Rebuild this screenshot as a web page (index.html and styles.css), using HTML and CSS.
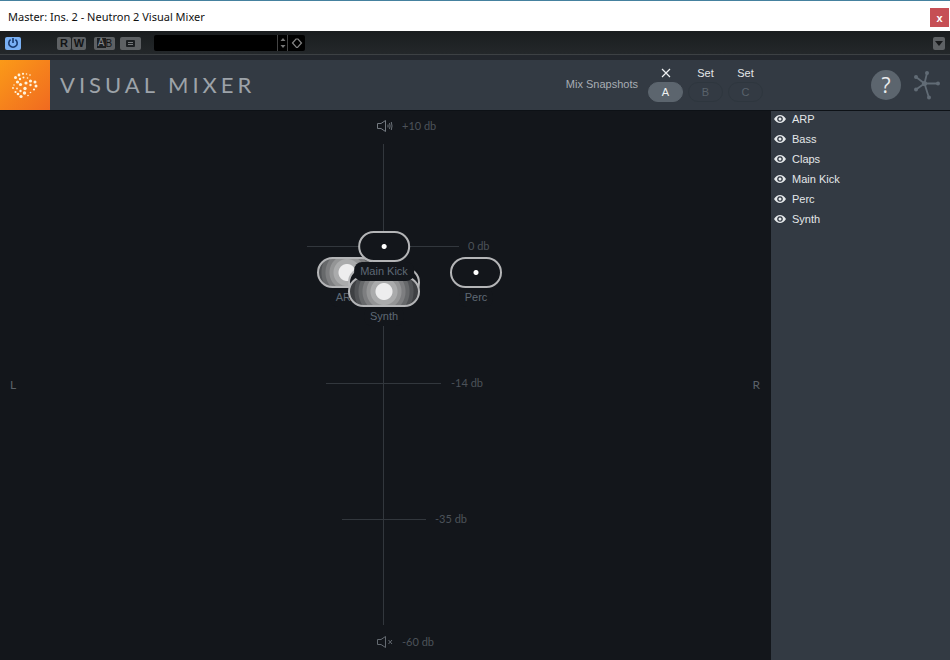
FILE: index.html
```html
<!DOCTYPE html>
<html lang="en">
<head>
<meta charset="utf-8">
<title>Master: Ins. 2 - Neutron 2 Visual Mixer</title>
<link rel="stylesheet" href="styles.css">
</head>
<body>
<div class="window">
  <header class="titlebar">
    <span class="titlebar-text">Master: Ins. 2 - Neutron 2 Visual Mixer</span>
    <button class="close" aria-label="Close window">x</button>
  </header>

  <div class="toolbar">
    <button class="tool power" aria-label="Bypass">
      <svg width="12" height="12" viewBox="0 0 12 12"><path d="M3.6 2.6a4.2 4.2 0 1 0 4.8 0M6 1v5" fill="none" stroke="#173a70" stroke-width="1.6"/></svg>
    </button>
    <div class="tool-pair">
      <button class="tool small">R</button>
      <button class="tool small">W</button>
    </div>
    <button class="tool wide ab"><span class="ab-a">A</span><span>B</span></button>
    <button class="tool wide" aria-label="Copy settings">
      <svg width="9" height="7" viewBox="0 0 9 7"><rect width="9" height="7" rx="1" fill="#1c1f22"/><path d="M2 2.500h5M2 4.500h5" stroke="#777a7d"/></svg>
    </button>
    <div class="preset">
      <input class="preset-name" type="text" aria-label="Preset name">
      <button class="preset-btn" aria-label="Step preset">
        <svg width="8" height="12" viewBox="0 0 8 12"><path d="M1.500 4L4 1l2.500 3zM1.500 8L4 11l2.500-3z" fill="#777"/></svg>
      </button>
      <button class="preset-btn preset-menu" aria-label="Preset menu">
        <svg width="12" height="12" viewBox="0 0 12 12"><path d="M1.500 6L5 2h2L10.500 6l-4 4.500h-1z" fill="none" stroke="#858585" stroke-width="1.200"/></svg>
      </button>
    </div>
    <button class="tool menu" aria-label="Plug-in menu">
      <svg width="8" height="5" viewBox="0 0 8 5"><path d="M0 0h8L4 5z" fill="#17191b"/></svg>
    </button>
  </div>

  <header class="header">
    <svg class="logo" viewBox="0 0 50 50" aria-hidden="true">
      <defs><linearGradient id="lg" x1="0" y1="0" x2="1" y2="1"><stop offset="0" stop-color="#fb9a18"/><stop offset="1" stop-color="#f06a20"/></linearGradient></defs>
      <rect width="50" height="50" fill="url(#lg)"/>
      <g fill="#fff4dc">
        <circle cx="15.500" cy="17.500" r="1.500"/><circle cx="19" cy="15" r="1.400"/><circle cx="23" cy="13.800" r="1.100"/><circle cx="26.500" cy="14" r=".8"/><circle cx="30" cy="15" r=".8"/>
        <circle cx="20" cy="19" r="1.200"/><circle cx="23.500" cy="17.500" r="1"/><circle cx="27.500" cy="18" r=".8"/><circle cx="17.500" cy="22" r="1.600"/><circle cx="20.500" cy="24.500" r="1.600"/>
        <circle cx="26" cy="23" r="1.600"/><circle cx="30.500" cy="21" r="1.600"/><circle cx="35" cy="22" r="1.500"/><circle cx="30.500" cy="25" r="1.200"/><circle cx="36" cy="26" r="1.500"/><circle cx="34" cy="29.500" r="1.100"/>
        <circle cx="25" cy="28.500" r="1.700"/><circle cx="24.500" cy="33" r="1.700"/><circle cx="21" cy="36.500" r="1.600"/><circle cx="18" cy="34" r="1.300"/><circle cx="20.500" cy="31" r="1.200"/><circle cx="15.500" cy="32" r="1.100"/>
        <circle cx="13" cy="28" r=".9"/><circle cx="17" cy="28.500" r=".9"/><circle cx="14" cy="25" r=".7"/><circle cx="30.500" cy="32.500" r=".8"/><circle cx="28" cy="35.500" r=".8"/>
      </g>
    </svg>
    <h1 class="product">VISUAL MIXER</h1>
    <div class="snapshots">
      <span class="snapshots-label">Mix Snapshots</span>
      <div class="snapshot">
        <button class="snapshot-set" aria-label="Clear snapshot A"><svg width="10" height="10" viewBox="0 0 10 10"><path d="M1 1l8 8M9 1L1 9" stroke="#eef0f2" stroke-width="1.200"/></svg></button>
        <button class="snapshot-slot active">A</button>
      </div>
      <div class="snapshot">
        <button class="snapshot-set">Set</button>
        <button class="snapshot-slot">B</button>
      </div>
      <div class="snapshot">
        <button class="snapshot-set">Set</button>
        <button class="snapshot-slot">C</button>
      </div>
    </div>
    <button class="help">?</button>
    <button class="network" aria-label="About">
      <svg width="28" height="30" viewBox="0 0 28 30"><g stroke="#616b75" stroke-width="1.800" fill="none"><path d="M11.500 13.500L14 3M11.500 13.500H25M11.500 13.500L16 28M11.500 13.500L3 19.500M11.500 13.500L3 7"/></g><g fill="#616b75"><circle cx="11.500" cy="13.500" r="2.600"/><circle cx="14" cy="3" r="2"/><circle cx="25" cy="13.500" r="2"/><circle cx="16" cy="27.500" r="2"/><circle cx="3" cy="19.500" r="2"/><circle cx="3" cy="7" r="2"/></g></svg>
    </button>
  </header>

  <main class="main">
    <section class="stage" aria-label="Mix field">
      <div class="side left">L</div>
      <div class="side right">R</div>
      <div class="axis"></div>
      <div class="tick zero"></div>
      <div class="tick fourteen"></div>
      <div class="tick thirtyfive"></div>
      <svg class="speaker loud" width="16" height="12" viewBox="0 0 16 12"><path d="M.5 3.500h3.500L8.500.5v11L4 8.500H.5z" fill="none" stroke="#747a81"/><path d="M11 4.500v3M12.500 3q1.200 3 0 6M14.300 2q1.400 4 0 8" fill="none" stroke="#747a81" stroke-width=".9"/></svg>
      <svg class="speaker mute" width="16" height="12" viewBox="0 0 16 12"><path d="M.5 3.500h3.500L8.500.5v11L4 8.500H.5zM11.500 4l3.500 4M15 4l-3.500 4" fill="none" stroke="#646a71"/></svg>
      <span class="db db-top">+10 db</span>
      <span class="db db-zero">0 db</span>
      <span class="db db-fourteen">-14 db</span>
      <span class="db db-thirtyfive">-35 db</span>
      <span class="db db-bottom">-60 db</span>
      <div class="node arp"><div class="pill level"></div><span class="node-label">ARP</span></div>
      <div class="node bass"><div class="pill"></div></div>
      <div class="node synth"><div class="pill level"></div><span class="node-label">Synth</span></div>
      <div class="node perc"><div class="pill idle"></div><span class="node-label">Perc</span></div>
      <div class="node kick"><div class="pill idle"></div><span class="node-label">Main Kick</span></div>
    </section>

    <aside class="tracks">
      <svg class="defs" width="0" height="0"><symbol id="eye" viewBox="0 0 12 10"><path fill-rule="evenodd" d="M0 5Q2.500 1 6 1t6 4Q9.500 9 6 9T0 5zM6 2.200a2.800 2.800 0 1 0 .01 0z" fill="#e6e9eb"/><circle cx="6" cy="5" r="1.500" fill="#e6e9eb"/></symbol></svg>
      <button class="track"><svg class="eye"><use href="#eye"/></svg>ARP</button>
      <button class="track"><svg class="eye"><use href="#eye"/></svg>Bass</button>
      <button class="track"><svg class="eye"><use href="#eye"/></svg>Claps</button>
      <button class="track"><svg class="eye"><use href="#eye"/></svg>Main Kick</button>
      <button class="track"><svg class="eye"><use href="#eye"/></svg>Perc</button>
      <button class="track"><svg class="eye"><use href="#eye"/></svg>Synth</button>
    </aside>
  </main>
</div>
</body>
</html>
```
FILE: styles.css
```css
* { box-sizing: border-box; }

body {
  margin: 0;
  background: #13161b;
  font-family: "Liberation Sans", Arial, sans-serif;
  font-size: 11px;
}

button {
  margin: 0;
  padding: 0;
  border: 0;
  background: none;
  color: inherit;
  font: inherit;
}

svg { display: block; }

.window {
  display: flex;
  flex-direction: column;
  min-height: 100vh;
}

/* Window title */
.titlebar {
  display: flex;
  align-items: center;
  justify-content: space-between;
  height: 31px;
  padding: 0 1px 0 8px;
  border-top: 1px solid #45819f;
  background: #fff;
  color: #111;
}

.titlebar-text {
  font-family: "Noto Sans", sans-serif;
  font-size: 11px;
}

.close {
  width: 19px;
  height: 19px;
  margin-top: 3px;
  background: #c64f55;
  color: #fff;
  font-weight: bold;
  line-height: 18px;
}

/* Host toolbar */
.toolbar {
  display: flex;
  align-items: center;
  height: 29px;
  padding: 0 5px;
  border-bottom: 5px solid #23272d;
  background: linear-gradient(#1a1d1f, #24282b);
  box-shadow: inset 0 -1px #3d4144;
}

.tool {
  display: flex;
  align-items: center;
  justify-content: center;
  height: 13px;
  border-radius: 2px;
  background: #5e6164;
  color: #111315;
  font-size: 11px;
  font-weight: bold;
}

.power { width: 16px; margin-right: 36px; background: #79b0f4; }
.tool-pair { display: flex; gap: 1px; margin-right: 8px; }
.small { width: 14px; }
.wide { width: 21px; margin-right: 5px; }
.ab { font-size: 10px; font-weight: normal; }
.ab-a { padding: 0 1px; background: #1c1f22; color: #85888b; line-height: 10px; }

.preset {
  display: flex;
  width: 151px;
  height: 16px;
  margin-left: 8px;
  border-radius: 2px;
  background: #000;
}

.preset-name {
  flex: 1;
  min-width: 0;
  padding: 0 4px;
  border: 0;
  background: none;
  color: #ccc;
}

.preset-btn {
  display: flex;
  align-items: center;
  justify-content: center;
  width: 10px;
  border-left: 1px solid #444;
}

.preset-menu { width: 18px; }
.menu { width: 12px; margin-left: auto; }

/* Product header */
.header {
  display: flex;
  align-items: center;
  height: 51px;
  padding-right: 9px;
  border-bottom: 1px solid #0d1116;
  background: #333a43;
}

.logo { width: 50px; height: 50px; }

.product {
  flex: 1;
  margin: 0 0 0 10px;
  padding-bottom: 2px;
  color: #9da3a9;
  font-family: Lato, sans-serif;
  font-size: 22px;
  font-weight: 400;
  letter-spacing: 4px;
}

.snapshots {
  display: flex;
  align-items: center;
  gap: 5px;
  margin-right: 108px;
  padding-bottom: 3px;
  color: #a8adb3;
}

.snapshots-label { margin-right: 5px; }

.snapshot {
  display: flex;
  flex-direction: column;
  align-items: center;
  gap: 1px;
  width: 35px;
}

.snapshot-set {
  display: flex;
  align-items: center;
  height: 16px;
  color: #e4e7e9;
}

.snapshot-slot {
  width: 35px;
  height: 20px;
  border: 1px solid #2e363e;
  border-radius: 10px;
  color: #59626b;
}

.snapshot-slot.active { border-color: #5c656e; background: #5c656e; color: #f0f1f2; }

.help {
  width: 30px;
  height: 30px;
  margin-right: 12px;
  border-radius: 50%;
  background: #5c656e;
  color: #e9ebed;
  font-family: "Open Sans", sans-serif;
  font-size: 21px;
  line-height: 30px;
}

/* Mix field */
.main { display: flex; flex: 1; }

.stage {
  position: relative;
  flex: 1;
  overflow: hidden;
  background: #13161b;
}

.side { position: absolute; top: 266px; color: #5b6168; font-family: Lato, sans-serif; font-size: 12px; }
.left { left: 10px; }
.right { right: 10px; }

.axis { position: absolute; left: calc(50% - 2px); top: 33px; bottom: 35px; width: 1px; background: #32373d; }
.tick { position: absolute; height: 1px; background: #32373d; }
.zero { left: calc(50% - 78px); top: 135px; width: 152px; }
.fourteen { left: calc(50% - 59px); top: 272px; width: 115px; }
.thirtyfive { left: calc(50% - 43px); top: 408px; width: 84px; }

.speaker { position: absolute; left: calc(50% - 8px); }
.loud { top: 9px; }
.mute { bottom: 12px; }

.db {
  position: absolute;
  color: #4c5259;
  font-family: Lato, sans-serif;
  font-size: 11px;
  line-height: 14px;
}

.db-top { left: calc(50% + 17px); top: 8px; }
.db-zero { left: calc(50% + 83px); top: 128px; }
.db-fourteen { left: calc(50% + 66px); top: 265px; }
.db-thirtyfive { left: calc(50% + 50px); top: 401px; }
.db-bottom { left: calc(50% + 17px); bottom: 11px; }

/* Track nodes, positioned by pan and gain */
.node {
  position: absolute;
  display: flex;
  flex-direction: column;
  align-items: center;
  transform: translateX(-50%);
}

.pill {
  width: 72px;
  height: 31px;
  border: 2px solid #b4b5b7;
  border-radius: 16px;
  background: #13161b;
}

.idle { width: 52px; background: radial-gradient(circle, #fff 0 2px, #13161b 3px); }

.level {
  background: radial-gradient(circle, #ededee 0 8px, #aaabac 9px 13px, #949596 14px 17px, #7d7e80 18px 21px, #67696b 22px 25px, #515356 26px 29px, #3e4043 30px);
}

.node-label {
  padding: 0 6px;
  border-radius: 8px;
  background: #13161b;
  color: #5f6975;
  line-height: 19px;
  white-space: nowrap;
}

.arp { left: calc(50% - 38px); top: 146px; }
.arp .pill { width: 60px; }
.bass { left: calc(50% - 1px); top: 156px; }
.synth { left: calc(50% - 1px); top: 165px; }
.perc { left: calc(50% + 91px); top: 146px; }
.kick { left: calc(50% - 1px); top: 120px; }

/* Track list */
.tracks {
  display: flex;
  flex-direction: column;
  gap: 4px;
  width: 180px;
  padding-left: 3px;
  border-left: 1px solid #13161b;
  background: #333a43;
  color: #e4e7e9;
}

.defs { position: absolute; }
.track { display: flex; align-items: center; gap: 6px; height: 16px; text-align: left; }
.eye { width: 12px; height: 10px; }
```
